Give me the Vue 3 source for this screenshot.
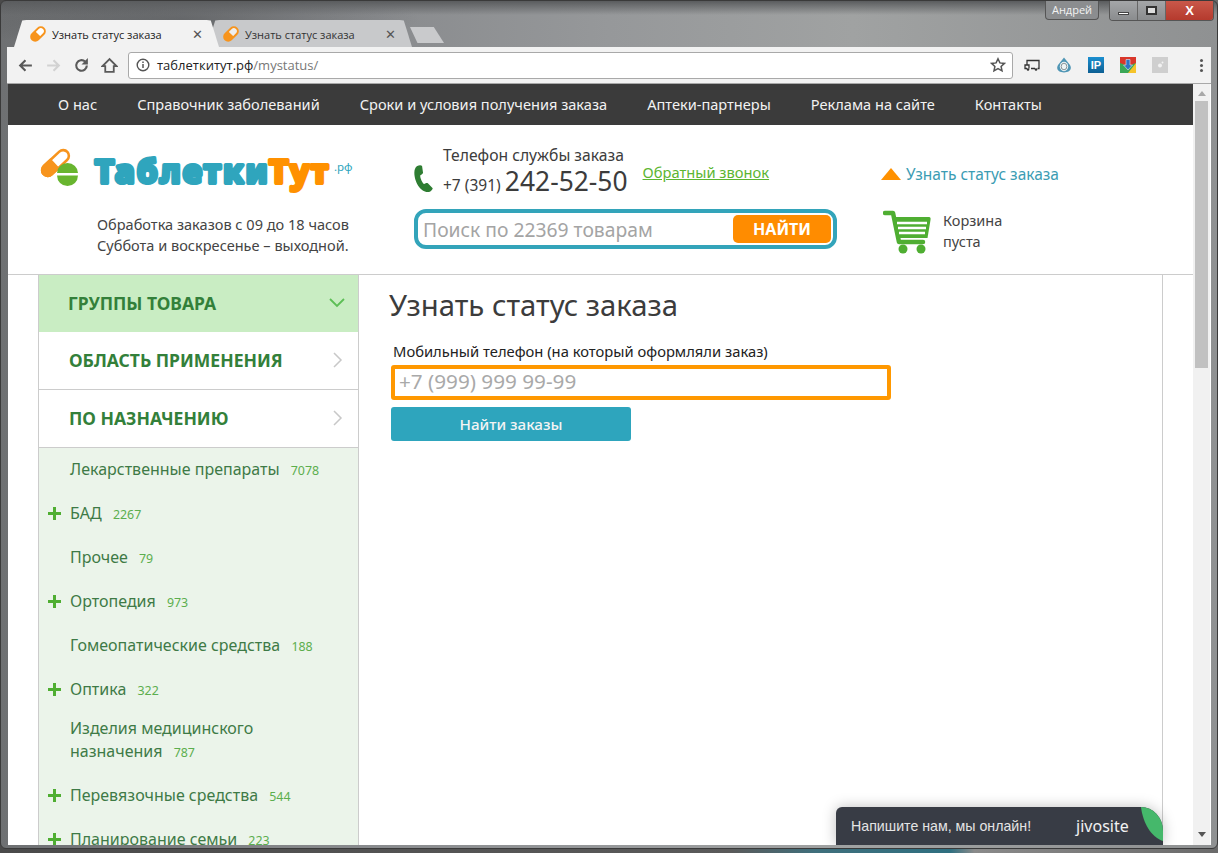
<script setup>
const nav = ["О нас", "Справочник заболеваний", "Сроки и условия получения заказа", "Аптеки-партнеры", "Реклама на сайте", "Контакты"];
const groups = [
  { name: "Лекарственные препараты", count: 7078 },
  { name: "БАД", count: 2267, plus: true },
  { name: "Прочее", count: 79 },
  { name: "Ортопедия", count: 973, plus: true },
  { name: "Гомеопатические средства", count: 188 },
  { name: "Оптика", count: 322, plus: true },
  { name: "Изделия медицинского назначения", count: 787, wrap: true },
  { name: "Перевязочные средства", count: 544, plus: true },
  { name: "Планирование семьи", count: 223, plus: true },
];
</script>

<template>
  <div class="desktop">
    <div class="window">
      <div class="titlebar">
        <div class="tabs">
          <div class="tab active">
            <svg class="pill" viewBox="0 0 18 18"><g transform="rotate(-45 9 9)"><rect x="1" y="5" width="16" height="8" rx="4" fill="#fff" stroke="#f7941d" stroke-width="2"/><path d="M5 5h4v8H5a4 4 0 0 1 0-8z" fill="#f7941d"/></g></svg>
            <span>Узнать статус заказа</span>
            <b class="x">✕</b>
          </div>
          <div class="tab">
            <svg class="pill" viewBox="0 0 18 18"><g transform="rotate(-45 9 9)"><rect x="1" y="5" width="16" height="8" rx="4" fill="#eee" stroke="#f7941d" stroke-width="2"/><path d="M5 5h4v8H5a4 4 0 0 1 0-8z" fill="#f7941d"/></g></svg>
            <span>Узнать статус заказа</span>
            <b class="x">✕</b>
          </div>
          <div class="newtab"></div>
        </div>
        <div class="winctl">
          <div class="user">Андрей</div>
          <div class="btns">
            <div class="wbtn"><i class="min"></i></div>
            <div class="wbtn"><i class="max"></i></div>
            <div class="wbtn close">X</div>
          </div>
        </div>
      </div>

      <div class="toolbar">
        <svg class="tool" viewBox="0 0 16 16"><path d="M14 8H3M8 3 3 8l5 5" fill="none" stroke="#5a5a5a" stroke-width="2"/></svg>
        <svg class="tool" viewBox="0 0 16 16"><path d="M2 8h11M8 3l5 5-5 5" fill="none" stroke="#d2d2d2" stroke-width="2"/></svg>
        <svg class="tool" viewBox="0 0 16 16"><path d="M13 8a5 5 0 1 1-1.600-3.700" fill="none" stroke="#5a5a5a" stroke-width="2"/><path d="M14 1v6H8z" fill="#5a5a5a"/></svg>
        <svg class="tool" viewBox="0 0 16 16"><path d="M8 2 1.500 8.500H4V14h8V8.500h2.500z" fill="none" stroke="#5a5a5a" stroke-width="1.700"/></svg>
        <div class="omni">
          <svg class="info" viewBox="0 0 14 14"><circle cx="7" cy="7" r="5.800" fill="none" stroke="#555" stroke-width="1.400"/><path d="M7 6v4M7 3.500v1.400" stroke="#555" stroke-width="1.500"/></svg>
          <span class="host">таблеткитут.рф</span><span class="path">/mystatus/</span>
          <svg class="star" viewBox="0 0 16 16"><path d="m8 1.800 1.900 4.100 4.500.5-3.300 3 .9 4.400L8 11.600l-4 2.200.9-4.400-3.300-3 4.500-.5z" fill="none" stroke="#555" stroke-width="1.500"/></svg>
        </div>
        <div class="exts">
          <svg viewBox="0 0 16 16"><path d="M3 8V3.500h12v8h-1.500M3 11.500H1V8h4v3.500M7 11.500h4" fill="none" stroke="#333" stroke-width="1.300"/><circle cx="4" cy="12.500" r="1.300" fill="#333"/><circle cx="12" cy="12.500" r="1.300" fill="#333"/></svg>
          <svg viewBox="0 0 16 16"><path d="M8 .5 2 8c-2.500 4.500 1 7.500 6 7.500s8.500-3 6-7.500z" fill="#4f96b5"/><ellipse cx="8" cy="9.500" rx="4.200" ry="4.700" fill="#eef3f4"/><ellipse cx="8" cy="9.500" rx="2.800" ry="3.300" fill="none" stroke="#7a8a90" stroke-width=".9"/></svg>
          <div class="ip">IP</div>
          <svg viewBox="0 0 16 16"><rect width="16" height="16" fill="#3aa757"/><path d="M0 0h16v6L8 9 0 6z" fill="#d9372b"/><path d="M16 6v10H8z" fill="#f6c42a"/><path d="M6 2.500h4V8h2.500L8 13 3.500 8H6z" fill="#2f72c4" stroke="#dfe8f5" stroke-width=".6"/></svg>
          <svg viewBox="0 0 16 16"><rect width="16" height="16" fill="#cfcfcf"/><circle cx="8" cy="8.500" r="2" fill="#f2f2f2"/><circle cx="10.500" cy="5.500" r="1" fill="#f2f2f2"/></svg>
        </div>
        <div class="dots"><i></i><i></i><i></i></div>
      </div>

      <div class="viewport">
        <div class="page">
          <nav class="topnav">
            <a v-for="item in nav" :key="item">{{ item }}</a>
          </nav>

          <header class="header">
            <div class="brand">
              <div class="logo">
                <svg class="logomark" viewBox="0 0 38 38">
                  <g transform="rotate(-43 14.500 14)"><rect x="-1.700" y="8.300" width="32.400" height="11.400" rx="5.700" fill="#fff" stroke="#f7941d" stroke-width="2.600"/><path d="M4 7h10v14H4a7 7 0 0 1 0-14z" fill="#f7941d"/></g>
                  <path d="M16 24a10.500 10 0 0 1 21 0z" fill="#68b52f"/><path d="M16 26.500a10.500 10.500 0 0 0 21 0z" fill="#68b52f"/>
                </svg>
                <svg class="wordmark" viewBox="0 0 240 36">
                  <text x="2" y="28" class="wm"><tspan class="teal">Таблетки</tspan><tspan class="orange">Тут</tspan></text>
                </svg>
                <span class="rf">.рф</span>
              </div>
              <p class="hours">Обработка заказов с 09 до 18 часов<br>Суббота и воскресенье – выходной.</p>
            </div>

            <div class="contact">
              <div class="phone-row">
                <svg class="phone-ico" viewBox="0 0 20 30"><path d="M3 2c2-1 4-1 5 0l1 7c0 1-2 2-3 3 0 3 2 7 4 9 1-1 3-2 4-1l5 5c0 1-2 4-5 4C6 29 0 18 0 9c0-3 1-6 3-7z" fill="#2e7d32"/></svg>
                <div class="phone-text">
                  <div class="ph-label">Телефон службы заказа</div>
                  <div class="ph-num"><span class="code">+7 (391)</span> <span class="digits">242-52-50</span></div>
                </div>
                <a class="callback">Обратный звонок</a>
              </div>
              <div class="search">
                <span class="search-ph">Поиск по 22369 товарам</span>
                <button class="search-btn">НАЙТИ</button>
              </div>
            </div>

            <div class="side">
              <a class="status-link"><i class="tri"></i>Узнать статус заказа</a>
              <div class="cart">
                <svg class="cart-ico" viewBox="0 0 48 44">
                  <path d="M2 3h8l6 29h24" fill="none" stroke="#4fae32" stroke-width="4.500" stroke-linecap="round" stroke-linejoin="round"/>
                  <path d="M10 7h36q2 0 1.500 3l-3 18H14z" fill="#4fae32"/>
                  <path d="M14 13h30M15 18h28M16 23h26" stroke="#fff" stroke-width="2.500"/>
                  <circle cx="20" cy="39" r="4.500" fill="#4fae32"/><circle cx="38" cy="39" r="4.500" fill="#4fae32"/>
                </svg>
                <div class="cart-text">Корзина<br>пуста</div>
              </div>
            </div>
          </header>

          <div class="body">
            <aside class="sidebar">
              <div class="acc open">
                <span>ГРУППЫ ТОВАРА</span>
                <svg viewBox="0 0 16 10"><path d="m1 1 7 7 7-7" fill="none" stroke="#5cbf55" stroke-width="1.800"/></svg>
              </div>
              <div class="acc">
                <span>ОБЛАСТЬ ПРИМЕНЕНИЯ</span>
                <svg class="chev" viewBox="0 0 10 16"><path d="m1 1 7 7-7 7" fill="none" stroke="#c8c8c8" stroke-width="1.500"/></svg>
              </div>
              <div class="acc">
                <span>ПО НАЗНАЧЕНИЮ</span>
                <svg class="chev" viewBox="0 0 10 16"><path d="m1 1 7 7-7 7" fill="none" stroke="#c8c8c8" stroke-width="1.500"/></svg>
              </div>
              <ul class="groups">
                <li v-for="g in groups" :key="g.name" :class="{ wrap: g.wrap }">
                  <i v-if="g.plus" class="plus"></i>
                  <span class="g-name">{{ g.name }}</span> <span class="g-count">{{ g.count }}</span>
                </li>
              </ul>
            </aside>

            <main class="content">
              <h1>Узнать статус заказа</h1>
              <label class="field-label">Мобильный телефон (на который оформляли заказ)</label>
              <div class="phone-input">+7 (999) 999 99-99</div>
              <button class="find">Найти заказы</button>
            </main>
          </div>

          <div class="chat">
            <span class="chat-text">Напишите нам, мы онлайн!</span>
            <span class="jivo">jivosite</span>
            <svg class="leaf" viewBox="0 0 22 38"><path d="M0 0C2 16 10 30 22 34V0z" fill="#45b86b"/></svg>
          </div>
        </div>

        <div class="scrollbar">
          <i class="arrow up"></i>
          <div class="thumb"></div>
          <i class="arrow down"></i>
        </div>
      </div>
    </div>
  </div>
</template>

<style>
html, body { margin: 0; padding: 0; background: #777; overflow: hidden; }
</style>

<style scoped>
.desktop {
  width: 1218px;
  height: 853px;
  overflow: hidden;
  background: linear-gradient(90deg, #4a4a4a 0%, #5a5a5a 60%, #3f6f7c 67%, #2f6f80 78%, #8a8a8a 80%, #6a6a6a 100%);
}
.window {
  width: 1218px;
  height: 849px;
  box-sizing: border-box;
  padding: 0 6px 3px 6px;
  display: flex;
  flex-direction: column;
  overflow: hidden;
  border: 1px solid #3a3a3a;
  border-radius: 6px;
  background:
    linear-gradient(#5a5c5e 0, rgba(90, 92, 94, 0) 14px),
    radial-gradient(ellipse 240px 30px at 180px 18px, rgba(60, 62, 64, 0.35), rgba(60, 62, 64, 0)),
    linear-gradient(90deg, #6e7072 0%, #85878a 25%, #96989a 50%, #a0a2a2 70%, #8f9192 100%);
  font-family: "Noto Sans", sans-serif;
  color: #3c3c3c;
}

.titlebar {
  height: 46px;
  display: flex;
  justify-content: space-between;
  flex-shrink: 0;
}
.tabs {
  display: flex;
  align-items: flex-end;
  margin-left: 7px;
}
.tab {
  width: 205px;
  height: 27px;
  margin-right: -12px;
  box-sizing: border-box;
  padding: 1px 16px 0 15px;
  display: flex;
  align-items: center;
  background: #c8c9cb;
  clip-path: polygon(0 100%, 4% 2%, 6% 0, 94% 0, 96% 2%, 100% 100%);
  font-family: "Open Sans", sans-serif;
  font-size: 11px;
  color: #333;
}
.tab.active { background: #f2f2f2; color: #222; z-index: 1; }
.pill { width: 18px; height: 18px; margin-right: 5px; flex-shrink: 0; }
.x { margin-left: auto; font-size: 13px; color: #555; font-weight: 700; font-family: "DejaVu Sans", sans-serif; }
.newtab {
  width: 34px;
  height: 16px;
  margin: 0 0 4px 10px;
  background: #c9cacc;
  box-sizing: border-box;
  clip-path: polygon(0 0, 70% 0, 100% 100%, 22% 100%);
}

.winctl { display: flex; gap: 10px; align-items: flex-start; margin-right: -3px; }
.user {
  width: 54px;
  height: 19px;
  box-sizing: border-box;
  border: 1px solid #555;
  border-top: none;
  border-radius: 0 0 4px 4px;
  background: #8b8d8f;
  color: #f2f2f2;
  font-size: 11px;
  line-height: 17px;
  text-align: center;
  font-family: "Open Sans", sans-serif;
}
.btns { display: flex; height: 19px; border: 1px solid #555; border-top: none; border-radius: 0 0 4px 4px; overflow: hidden; }
.wbtn { width: 27px; display: flex; align-items: center; justify-content: center; background: linear-gradient(#a4a6a8, #8a8c8e); border-right: 1px solid #666; }
.wbtn.close { width: 47px; border-right: none; background: linear-gradient(#c9584a, #b53a2d); color: #fff; font-size: 13px; font-weight: 700; font-family: "Liberation Sans", sans-serif; }
.min { width: 11px; height: 3px; background: #fff; border: 1px solid #444; margin-top: 6px; box-sizing: border-box; }
.max { width: 11px; height: 9px; border: 2px solid #333; box-sizing: border-box; background: #ddd; }

.toolbar {
  height: 37px;
  flex-shrink: 0;
  box-sizing: border-box;
  background: #f2f2f2;
  border-bottom: 1px solid #a8a8a8;
  display: flex;
  align-items: center;
  padding: 0 0 0 10px;
  gap: 11px;
}
.tool { width: 17px; height: 17px; }
.omni {
  width: 885px;
  height: 27px;
  margin-left: -1px;
  box-sizing: border-box;
  background: #fff;
  border: 1px solid #a9a9a9;
  border-radius: 3px;
  display: flex;
  align-items: center;
  padding: 0 6px 0 7px;
  font-family: "Open Sans", sans-serif;
  font-size: 13px;
}
.info { width: 14px; height: 14px; margin-right: 7px; }
.host { color: #222; }
.path { color: #777; }
.star { width: 16px; height: 16px; margin-left: auto; }
.exts { display: flex; gap: 16px; align-items: center; }
.exts svg, .ip { width: 16px; height: 16px; }
.ip {
  background: linear-gradient(#1b8fd0, #0d5f93);
  color: #fff;
  font-size: 11px;
  font-weight: 700;
  line-height: 16px;
  text-align: center;
  font-family: "Liberation Sans", sans-serif;
}
.dots { display: flex; flex-direction: column; gap: 2px; margin-left: 21px; }
.dots i { width: 3px; height: 3px; background: #555; border-radius: 50%; }

.viewport {
  flex: 1;
  min-height: 0;
  margin-left: 1px;
  display: flex;
  background: #fff;
}
.page {
  width: 1185px;
  position: relative;
  display: flex;
  flex-direction: column;
  overflow: hidden;
}
.topnav {
  height: 41px;
  flex-shrink: 0;
  box-sizing: border-box;
  background: #3b3b3b;
  display: flex;
  align-items: center;
  padding: 0 0 2px 50px;
  gap: 40px;
}
.topnav a { color: #f2f2f2; font-size: 14.580px; }

.header {
  height: 150px;
  flex-shrink: 0;
  box-sizing: border-box;
  border-bottom: 1px solid #ccc;
  display: flex;
}
.brand { width: 406px; padding: 24px 0 0 33px; box-sizing: border-box; }
.logo { display: flex; align-items: flex-start; }
.logomark { width: 38px; height: 38px; flex-shrink: 0; overflow: visible; }
.wordmark { width: 240px; height: 36px; margin: 6px 0 0 14px; overflow: visible; flex-shrink: 0; }
.wm {
  font-family: "Noto Sans", sans-serif;
  font-weight: 700;
  font-size: 33px;
  stroke-width: 4px;
  stroke-linejoin: round;
  letter-spacing: 2.300px;
}
.teal { fill: #2fa5bd; stroke: #2fa5bd; }
.orange { fill: #ff9100; stroke: #ff9100; }
.rf { color: #2fa5bd; font-size: 11.500px; margin: 10px 0 0 1px; white-space: nowrap; }
.hours { margin: 23px 0 0 56px; font-size: 14.550px; line-height: 21px; color: #444; white-space: nowrap; }

.contact { width: 466px; padding-top: 20px; box-sizing: border-box; }
.phone-row { display: flex; align-items: flex-start; }
.phone-ico { width: 20px; height: 29px; margin-top: 19px; flex-shrink: 0; }
.phone-text { margin-left: 9px; }
.ph-label { font-size: 15.700px; line-height: 20px; color: #3c3c3c; white-space: nowrap; }
.ph-num { line-height: 32px; white-space: nowrap; }
.code { font-size: 15.500px; }
.digits { font-size: 26.400px; }
.callback { margin: 17px 0 0 15px; font-size: 14.700px; color: #5cb531; text-decoration: underline; white-space: nowrap; }
.search {
  width: 423px;
  height: 40px;
  margin-top: 8px;
  box-sizing: border-box;
  border: 4px solid #33a4ba;
  border-radius: 12px;
  display: flex;
  align-items: center;
  justify-content: space-between;
  padding: 0 2px 0 5px;
}
.search-ph { font-size: 19.300px; color: #a4a4a4; }
.search-btn {
  width: 98px;
  height: 28px;
  border: none;
  border-radius: 5px;
  background: #ff8c00;
  color: #fff;
  font-family: inherit;
  font-size: 16px;
  font-weight: 700;
  padding: 0;
}

.side { padding: 39px 0 0 1px; }
.status-link { display: flex; align-items: center; color: #3b9cb3; font-size: 15.500px; line-height: 20px; white-space: nowrap; }
.tri { width: 0; height: 0; border: 10px solid transparent; border-top: none; border-bottom: 12px solid #ff9100; margin-right: 5px; }
.cart { display: flex; margin-top: 26px; }
.cart-ico { width: 48px; height: 44px; flex-shrink: 0; margin-left: 2px; }
.cart-text { margin-left: 12px; font-size: 14.500px; line-height: 21px; color: #444; }

.body { flex: 1; min-height: 0; display: flex; }
.sidebar {
  width: 321px;
  margin-left: 30px;
  flex-shrink: 0;
  box-sizing: border-box;
  border-left: 1px solid #ccc;
  border-right: 1px solid #ccc;
}
.acc {
  height: 58px;
  box-sizing: border-box;
  border-bottom: 1px solid #ccc;
  display: flex;
  align-items: center;
  justify-content: space-between;
  padding: 0 15px 1px 30px;
  color: #33803a;
  font-size: 17.500px;
  font-weight: 700;
}
.acc.open { height: 57px; padding-left: 29px; padding-right: 13px; background: #c9edc3; border-bottom: none; }
.acc.open svg { width: 16px; height: 10px; }
.chev { width: 10px; height: 16px; }
.groups {
  margin: 0;
  padding: 0 0 0 31px;
  list-style: none;
  background: #ebf4ea;
  height: 420px;
}
.groups li {
  position: relative;
  min-height: 44px;
  box-sizing: border-box;
  padding-top: 10px;
  font-size: 16px;
  line-height: 22px;
  color: #3e7a46;
  width: 280px;
  white-space: nowrap;
}
.groups li.wrap { white-space: normal; min-height: 62px; padding-top: 5px; line-height: 23px; width: 220px; }
.g-count { font-size: 12.400px; color: #5cae4e; margin-left: 7px; }
.plus {
  position: absolute;
  left: -22px;
  top: 15px;
  width: 13px;
  height: 13px;
  background:
    linear-gradient(#4fae32, #4fae32) center / 13px 3px no-repeat,
    linear-gradient(#4fae32, #4fae32) center / 3px 13px no-repeat;
}

.content {
  width: 804px;
  box-sizing: border-box;
  border-right: 1px solid #ccc;
  padding: 11px 0 0 30px;
}
h1 { margin: 0; font-size: 29.300px; line-height: 38px; font-weight: 400; color: #3c3c3c; white-space: nowrap; }
.field-label { display: block; margin: 17px 0 0 4px; font-size: 14.750px; line-height: 20px; color: #222; white-space: nowrap; }
.phone-input {
  width: 500px;
  height: 35px;
  margin: 4px 0 0 2px;
  box-sizing: border-box;
  border: 4px solid #ff9800;
  border-radius: 3px;
  padding-left: 4px;
  font-size: 20.700px;
  line-height: 25px;
  color: #a9a9a9;
}
.find {
  display: block;
  width: 240px;
  height: 34px;
  margin: 7px 0 0 2px;
  border: none;
  border-radius: 3px;
  background: #2ea5bd;
  color: #f4f4f4;
  font-family: inherit;
  font-size: 15.200px;
  font-weight: 500;
}

.chat {
  position: absolute;
  right: 30px;
  bottom: 0;
  width: 327px;
  height: 38px;
  background: #383c45;
  border-radius: 6px 22px 0 0 / 6px 24px 0 0;
  box-shadow: 0 0 14px rgba(0, 0, 0, 0.25);
  display: flex;
  align-items: center;
  overflow: hidden;
  font-family: "Liberation Sans", sans-serif;
}
.chat-text { margin-left: 15px; color: #e4e4e4; font-size: 14.200px; white-space: nowrap; }
.jivo { margin-left: 45px; color: #f2f2f2; font-size: 16px; font-family: "Noto Sans", sans-serif; }
.leaf { position: absolute; right: 0; top: 0; width: 22px; height: 38px; }

.scrollbar {
  width: 17px;
  background: #f1f1f1;
  display: flex;
  flex-direction: column;
  align-items: center;
  flex-shrink: 0;
}
.thumb { width: 13px; height: 267px; background: #c1c1c1; margin-top: 5px; }
.arrow { width: 0; height: 0; border: 4px solid transparent; margin-top: 7px; }
.arrow.up { border-top: none; border-bottom: 5px solid #a8a8a8; }
.arrow.down { border-bottom: none; border-top: 5px solid #555; margin-top: auto; margin-bottom: 8px; }
</style>
